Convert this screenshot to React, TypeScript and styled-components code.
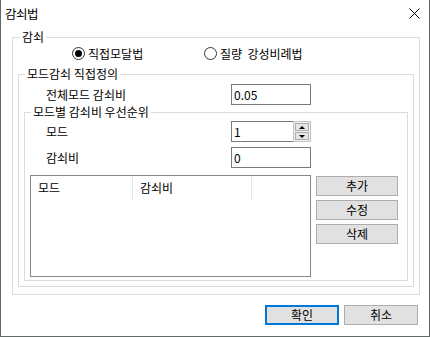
import styled, { createGlobalStyle } from "styled-components";

const GlobalStyle = createGlobalStyle`
  html, body {
    margin: 0;
    padding: 0;
    background: #fff;
  }
  body {
    font-family: "Noto Sans CJK KR", "Noto Sans", sans-serif;
    font-size: 12px;
    color: #000;
  }
  * {
    box-sizing: border-box;
  }
`;

const Window = styled.div`
  width: 430px;
  height: 337px;
  background: #fff;
  border: 1px solid #646a68;
  border-top: none;
  display: flex;
  flex-direction: column;
`;

const TitleBar = styled.div`
  height: 27px;
  display: flex;
  align-items: center;
  justify-content: space-between;
  padding: 0 9px 0 4px;
`;

const TitleText = styled.span`
  font-size: 12.5px;
  letter-spacing: -0.5px;
  line-height: 14px;
`;

const CloseIcon = styled.svg`
  width: 11px;
  height: 11px;
  display: block;
`;

const Body = styled.div`
  flex: 1;
  display: flex;
  flex-direction: column;
  padding: 10px 9px 0 11px;
`;

const Group = styled.div`
  position: relative;
  border: 1px solid #dcdcdc;
  display: flex;
  flex-direction: column;
`;

const Legend = styled.span<{ $left: number }>`
  position: absolute;
  top: -8px;
  left: ${(p) => p.$left}px;
  padding: 0 2px;
  background: #fff;
  line-height: 14px;
  white-space: nowrap;
`;

const OuterGroup = styled(Group)`
  height: 258px;
  padding: 9px 5px 7px 5px;
`;

const DirectGroup = styled(Group)`
  flex: 1;
  margin-top: 14px;
  padding: 9px 5px 5px 5px;
`;

const PriorityGroup = styled(Group)`
  flex: 1;
  margin-top: 7px;
  padding: 8px 5px 3px 5px;
`;

const RadioRow = styled.div`
  display: flex;
  height: 13px;
  padding-left: 54px;
`;

const RadioItem = styled.label`
  width: 132px;
  display: flex;
  align-items: center;
  gap: 3px;
  line-height: 14px;
  white-space: pre;
`;

const RadioCircle = styled.span<{ $checked?: boolean }>`
  width: 13px;
  height: 13px;
  border-radius: 50%;
  border: 1px solid #333;
  background: #fff;
  display: flex;
  align-items: center;
  justify-content: center;
  flex-shrink: 0;
  &::after {
    content: "";
    width: 7px;
    height: 7px;
    border-radius: 50%;
    background: ${(p) => (p.$checked ? "#000" : "transparent")};
  }
`;

const FieldRow = styled.div<{ $indent: number; $gap?: number }>`
  display: flex;
  align-items: center;
  padding-left: ${(p) => p.$indent}px;
  margin-top: ${(p) => p.$gap ?? 0}px;
`;

const FieldLabel = styled.span`
  width: 185px;
  line-height: 14px;
  white-space: nowrap;
`;

const TextBox = styled.div`
  width: 80px;
  height: 21px;
  border: 1px solid #7a7a7a;
  background: #fff;
  display: flex;
  align-items: center;
  padding-left: 2px;
  font-size: 12px;
`;

const Spin = styled.div`
  width: 80px;
  height: 21px;
  display: flex;
`;

const SpinText = styled(TextBox)`
  width: auto;
  flex: 1;
  border-right: none;
`;

const SpinButtons = styled.div`
  width: 18px;
  display: flex;
  flex-direction: column;
  border: 1px solid #c4c4c4;
  padding: 1px;
  gap: 1px;
  background: #f0f0f0;
`;

const SpinButton = styled.div`
  flex: 1;
  background: #e5e5e5;
  border: 1px solid #adadad;
  display: flex;
  align-items: center;
  justify-content: center;
`;

const Arrow = styled.span<{ $down?: boolean }>`
  width: 0;
  height: 0;
  border-left: 3px solid transparent;
  border-right: 3px solid transparent;
  ${(p) =>
    p.$down ? "border-top: 3px solid #000;" : "border-bottom: 3px solid #000;"}
`;

const ListRow = styled.div`
  flex: 1;
  display: flex;
  gap: 5px;
  margin-top: 7px;
`;

const ListBox = styled.div`
  width: 281px;
  border: 1px solid #828790;
  background: #fff;
`;

const ListHeader = styled.div`
  display: flex;
  height: 24px;
`;

const HeaderCell = styled.div<{ $width: number }>`
  width: ${(p) => p.$width}px;
  padding-left: 7px;
  border-right: 1px solid #e5e5e5;
  line-height: 23px;
`;

const SideButtons = styled.div`
  display: flex;
  flex-direction: column;
  gap: 4px;
  padding-top: 1px;
`;

const Button = styled.div<{ $default?: boolean; $width?: number }>`
  width: ${(p) => p.$width ?? 82}px;
  height: 20px;
  background: #e1e1e1;
  border: ${(p) => (p.$default ? "2px solid #0078d7" : "1px solid #adadad")};
  display: flex;
  align-items: center;
  justify-content: center;
  line-height: 14px;
`;

const Footer = styled.div`
  display: flex;
  justify-content: flex-end;
  gap: 5px;
  margin-top: 10px;
  padding-right: 2px;
`;

export default function App() {
  return (
    <>
      <GlobalStyle />
      <Window>
        <TitleBar>
          <TitleText>감쇠법</TitleText>
          <CloseIcon viewBox="0 0 11 11">
            <path d="M0.5 0.5 L10.5 10.5 M10.5 0.5 L0.5 10.5" stroke="#000" strokeWidth="1" />
          </CloseIcon>
        </TitleBar>
        <Body>
          <OuterGroup>
            <Legend $left={7}>감쇠</Legend>
            <RadioRow>
              <RadioItem>
                <RadioCircle $checked />
                직접모달법
              </RadioItem>
              <RadioItem>
                <RadioCircle />
                {"질량  강성비례법"}
              </RadioItem>
            </RadioRow>
            <DirectGroup>
              <Legend $left={6}>모드감쇠 직접정의</Legend>
              <FieldRow $indent={22}>
                <FieldLabel>전체모드 감쇠비</FieldLabel>
                <TextBox>0.05</TextBox>
              </FieldRow>
              <PriorityGroup>
                <Legend $left={6}>모드별 감쇠비 우선순위</Legend>
                <FieldRow $indent={16}>
                  <FieldLabel>모드</FieldLabel>
                  <Spin>
                    <SpinText>1</SpinText>
                    <SpinButtons>
                      <SpinButton>
                        <Arrow />
                      </SpinButton>
                      <SpinButton>
                        <Arrow $down />
                      </SpinButton>
                    </SpinButtons>
                  </Spin>
                </FieldRow>
                <FieldRow $indent={16} $gap={5}>
                  <FieldLabel>감쇠비</FieldLabel>
                  <TextBox>0</TextBox>
                </FieldRow>
                <ListRow>
                  <ListBox>
                    <ListHeader>
                      <HeaderCell $width={102}>모드</HeaderCell>
                      <HeaderCell $width={119}>감쇠비</HeaderCell>
                    </ListHeader>
                  </ListBox>
                  <SideButtons>
                    <Button>추가</Button>
                    <Button>수정</Button>
                    <Button>삭제</Button>
                  </SideButtons>
                </ListRow>
              </PriorityGroup>
            </DirectGroup>
          </OuterGroup>
          <Footer>
            <Button $default $width={74}>
              확인
            </Button>
            <Button $width={74}>취소</Button>
          </Footer>
        </Body>
      </Window>
    </>
  );
}
